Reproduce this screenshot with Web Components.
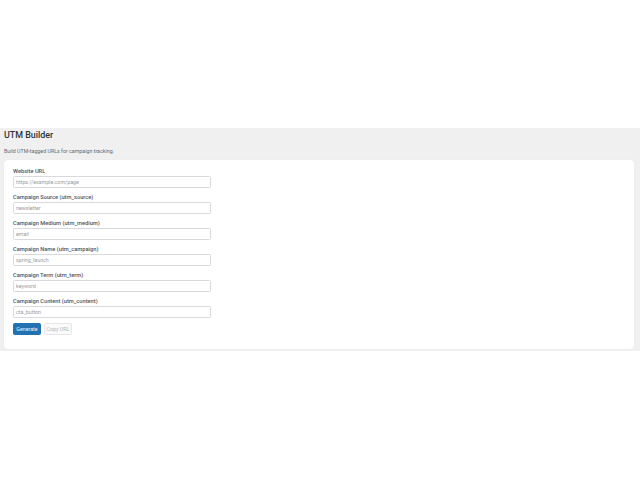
<!DOCTYPE html>
<html>
<head>
<meta charset="utf-8">
<title>UTM Builder</title>
<style>
html, body { margin: 0; padding: 0; background: #fff; }
body { font-family: Roboto, "Open Sans", sans-serif; }
</style>
</head>
<body>
<utm-page>
  <utm-field label="Website URL" placeholder="https://example.com/page"></utm-field>
  <utm-field label="Campaign Source (utm_source)" placeholder="newsletter"></utm-field>
  <utm-field label="Campaign Medium (utm_medium)" placeholder="email"></utm-field>
  <utm-field label="Campaign Name (utm_campaign)" placeholder="spring_launch"></utm-field>
  <utm-field label="Campaign Term (utm_term)" placeholder="keyword"></utm-field>
  <utm-field label="Campaign Content (utm_content)" placeholder="cta_button"></utm-field>
</utm-page>
<script>
const pageTemplate = document.createElement('template');
pageTemplate.innerHTML = `
<style>
:host {
  display: block;
  margin-top: 128px;
  height: 223px;
  background: #f0f0f1;
  padding: 0 6px 0 4px;
  box-sizing: border-box;
  color: #1d2327;
}
h1 { margin: 0; padding-top: 1px; font-size: 8.9px; line-height: 13px; font-weight: 500; color: #2c3338; }
p { margin: 0; padding-top: 5px; font-size: 5.3px; line-height: 8px; color: #646970; }
.card {
  margin-top: 5px;
  height: 189px;
  box-sizing: border-box;
  background: #fff;
  border-radius: 4px;
  box-shadow: 0 0 1px rgba(0,0,0,.1);
  padding: 7px 9px;
}
.fields { display: grid; grid-auto-rows: 26px; width: 198px; }
.actions { display: flex; gap: 3px; }
button {
  font: inherit;
  font-size: 5.3px;
  height: 12px;
  width: 28px;
  padding: 0;
  border-radius: 1.5px;
  box-sizing: border-box;
}
.primary { background: #2271b1; border: 1px solid #2271b1; color: #e8f0f6; }
.secondary { background: #fafafa; border: 1px solid #e6e6e8; color: #b4b7ba; }
</style>
<h1>UTM Builder</h1>
<p>Build UTM-tagged URLs for campaign tracking.</p>
<div class="card">
  <div class="fields"><slot></slot></div>
  <div class="actions">
    <button class="primary">Generate</button>
    <button class="secondary">Copy URL</button>
  </div>
</div>
`;

class UtmPage extends HTMLElement {
  constructor() {
    super();
    const root = this.attachShadow({ mode: 'open' });
    root.appendChild(pageTemplate.content.cloneNode(true));
  }
}

const fieldTemplate = document.createElement('template');
fieldTemplate.innerHTML = `
<style>
:host { display: block; }
label { display: block; font-size: 5.7px; line-height: 9px; font-weight: 500; color: #50575e; }
input {
  display: block;
  width: 100%;
  height: 12px;
  margin: 0;
  padding: 0 2px;
  box-sizing: border-box;
  border: 1px solid #d8d9dc;
  border-radius: 1.5px;
  background: #fff;
  font: inherit;
  font-size: 5.3px;
  outline: none;
}
input::placeholder { color: #999ca1; opacity: 1; }
</style>
<label></label>
<input type="text">
`;

class UtmField extends HTMLElement {
  constructor() {
    super();
    const root = this.attachShadow({ mode: 'open' });
    root.appendChild(fieldTemplate.content.cloneNode(true));
  }

  connectedCallback() {
    this.shadowRoot.querySelector('label').textContent = this.getAttribute('label');
    this.shadowRoot.querySelector('input').placeholder = this.getAttribute('placeholder');
  }
}

customElements.define('utm-page', UtmPage);
customElements.define('utm-field', UtmField);
</script>
</body>
</html>
